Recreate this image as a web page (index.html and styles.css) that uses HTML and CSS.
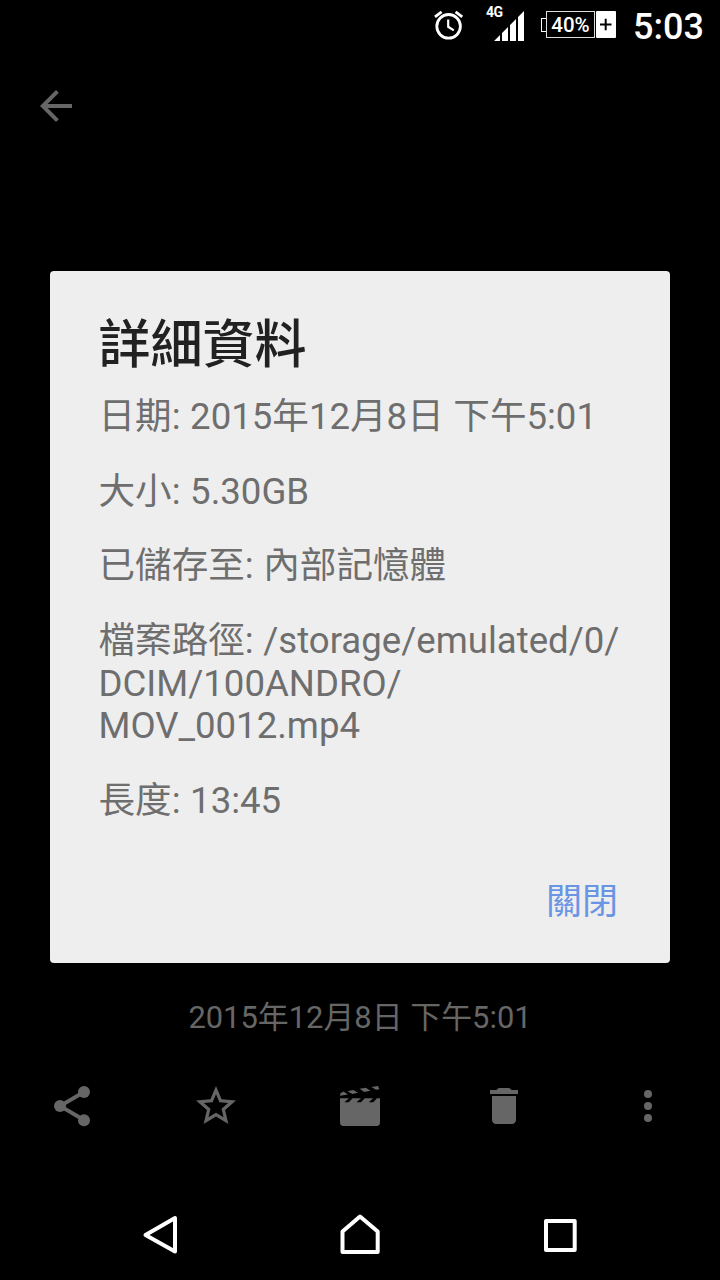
FILE: index.html
```html
<!DOCTYPE html>
<html lang="zh-Hant">
<head>
  <meta charset="UTF-8">
  <meta name="viewport" content="width=device-width, initial-scale=1.0">
  <title>詳細資料</title>
  <link rel="stylesheet" href="styles.css">
</head>
<body>

  <div class="screen">
    <header class="status-bar">
      <svg class="alarm" width="30" height="30" viewBox="0 0 30 30">
        <circle cx="14.6" cy="16.3" r="11.8" fill="none" stroke="#fff" stroke-width="2.8"/>
        <path d="M14.2 9.5v7.3l5.6 3.6" fill="none" stroke="#fff" stroke-width="2.2"/>
        <path d="M1 6.9L7.6 1.8M28.2 6.9L21.6 1.8" stroke="#fff" stroke-width="2.8"/>
      </svg>
      <div class="signal">
        <span class="network">4G</span>
        <svg width="30" height="30" viewBox="0 0 30 30" fill="#fff">
          <path d="M0 30L6 24v6zM8 22l6-6v14H8zM16 14l6-6v22h-6zM24 6l6-6v30h-6z"/>
        </svg>
      </div>
      <div class="battery">
        <span class="battery-tip"></span>
        <span class="battery-level">40%</span>
        <svg width="20" height="27" viewBox="0 0 20 27">
          <rect width="20" height="27" rx="1" fill="#fff"/>
          <path d="M4 13.5h11.5M9.7 7.800v11.4" stroke="#000" stroke-width="2"/>
        </svg>
      </div>
      <span class="clock">5:03</span>
    </header>

    <div class="top-bar">
      <svg class="icon" viewBox="0 0 24 24"><path d="M20 11H7.83l5.59-5.59L12 4l-8 8 8 8 1.41-1.41L7.83 13H20v-2z"/></svg>
    </div>

    <div class="dialog">
      <h1 class="dialog-title">詳細資料</h1>
      <p>日期: 2015年12月8日 下午5:01</p>
      <p>大小: 5.30GB</p>
      <p>已儲存至: 內部記憶體</p>
      <p>檔案路徑: /storage/emulated/0/<br>DCIM/100ANDRO/<br>MOV_0012.mp4</p>
      <p>長度: 13:45</p>
      <button class="close">關閉</button>
    </div>

    <div class="caption">2015年12月8日 下午5:01</div>

    <div class="actions">
      <svg class="icon" viewBox="0 0 24 24">
        <path d="M18 5L6 12l12 7" fill="none" stroke="#666" stroke-width="1.9"/>
        <circle cx="18" cy="5" r="3"/><circle cx="6" cy="12" r="3"/><circle cx="18" cy="19.1" r="3"/>
      </svg>
      <svg class="icon" viewBox="0 0 24 24"><path d="M22 9.24l-7.19-.62L12 2 9.19 8.63 2 9.24l5.46 4.73L5.82 21 12 17.27 18.18 21l-1.63-7.03L22 9.24zM12 15.4l-3.76 2.27 1-4.28-3.32-2.88 4.38-.38L12 6.1l1.71 4.04 4.38.38-3.32 2.88 1 4.28L12 15.4z"/></svg>
      <svg class="icon" viewBox="0 0 24 24">
        <path d="M2 8.1h4.5L4.2 10.1h2.2l1.9-2h4.2l-2.2 2h2.2l1.9-2h4.2l-2.2 2h2.2l1.9-2H22v12.2a1.7 1.7 0 0 1-1.7 1.7H3.7A1.7 1.7 0 0 1 2 20.3z"/>
        <path d="M2 6.9L2.2 5.6 3.8 4.8 5.9 6.3zM5.7 4.6L8.7 4 11 5.4 8.2 6zM11.8 3.4l3.1-.5 2.3 1.5-3.1.6zM17.7 2.5L21 2l.7 1.6-1.7.3z"/>
      </svg>
      <svg class="icon" viewBox="0 0 24 24"><path d="M6 19c0 1.1.9 2 2 2h8c1.1 0 2-.9 2-2V7H6v12zM19 4h-3.2l-.8-.8q-.3-.2-.7-.2H9.7q-.4 0-.7.2l-.8.8H5v2h14V4z"/></svg>
      <svg class="icon" viewBox="0 0 24 24"><circle cx="12" cy="6" r="2"/><circle cx="12" cy="12" r="2"/><circle cx="12" cy="18" r="2"/></svg>
    </div>

    <nav class="nav-bar">
      <svg width="48" height="48" viewBox="0 0 48 48"><path d="M9.5 24L39 7v33.5z"/></svg>
      <svg width="48" height="48" viewBox="0 0 48 48"><path d="M24 5.5L41.7 20.5V41H6.5V20.5z"/></svg>
      <svg width="48" height="48" viewBox="0 0 48 48"><path d="M10 10h28.7v29H10z"/></svg>
    </nav>
  </div>

</body>
</html>
```
FILE: styles.css
```css
body {
  margin: 0;
  background-color: #000;
  font-family: Roboto, "Noto Sans CJK TC", sans-serif;
}

.screen {
  display: flex;
  flex-direction: column;
  width: 720px;
  height: 1280px;
  overflow: hidden;
  background-color: #000;
}

.status-bar {
  display: flex;
  justify-content: flex-end;
  height: 50px;
  padding-right: 16px;
  box-sizing: border-box;
  color: #fff;
}

.alarm {
  margin: 10px 22px 0 0;
}

.signal {
  display: flex;
  width: 38px;
  margin-right: 17px;
}

.signal svg {
  flex-shrink: 0;
  margin: 11px 0 0 -9px;
}

.network {
  width: 17px;
  flex-shrink: 0;
  margin-top: 4px;
  font-size: 14px;
  letter-spacing: -0.5px;
  line-height: 16px;
  font-weight: 700;
}

.battery {
  display: flex;
  height: 27px;
  margin: 11px 17px 0 0;
}

.battery-tip {
  width: 5px;
  height: 14px;
  margin-top: 7px;
  border: 1px solid #fff;
  border-right: none;
  box-sizing: border-box;
}

.battery-level {
  width: 49px;
  margin-right: 1px;
  border: 1px solid #ddd;
  box-sizing: border-box;
  font-size: 20.5px;
  line-height: 26px;
  font-weight: 500;
  text-align: center;
}

.clock {
  width: 71px;
  font-size: 36px;
  line-height: 54px;
  font-weight: 500;
}

.top-bar {
  height: 189px;
  padding: 32px 32px 0;
}

.icon {
  width: 48px;
  height: 48px;
  fill: #666;
}

.dialog {
  display: flex;
  flex-direction: column;
  height: 692px;
  margin: 0 50px;
  padding: 39px 49px 0 48.5px;
  box-sizing: border-box;
  border-radius: 4px;
  background-color: #eee;
  color: #6e6e6e;
}

.dialog-title {
  margin: 0 0 15px;
  font-size: 52px;
  line-height: 71px;
  font-weight: 500;
  color: #212121;
}

.dialog p {
  margin: 0 0 31.8px;
  font-size: 36.6px;
  line-height: 42.8px;
  word-spacing: 0.5px;
  white-space: nowrap;
}

.close {
  align-self: flex-end;
  margin: 26px 3px 0 0;
  padding: 0;
  border: none;
  background: none;
  font-family: inherit;
  font-size: 36px;
  line-height: 43px;
  color: #6a94e4;
}

.caption {
  height: 43px;
  margin-top: 33px;
  font-size: 30.9px;
  line-height: 43px;
  text-align: center;
  color: #666;
}

.actions {
  display: flex;
  justify-content: space-around;
  margin-top: 43px;
}

.nav-bar {
  display: flex;
  justify-content: space-around;
  margin-top: 81px;
  padding: 0 60px;
}

.nav-bar svg {
  fill: none;
  stroke: #fff;
  stroke-width: 4;
  stroke-linejoin: round;
}
```
